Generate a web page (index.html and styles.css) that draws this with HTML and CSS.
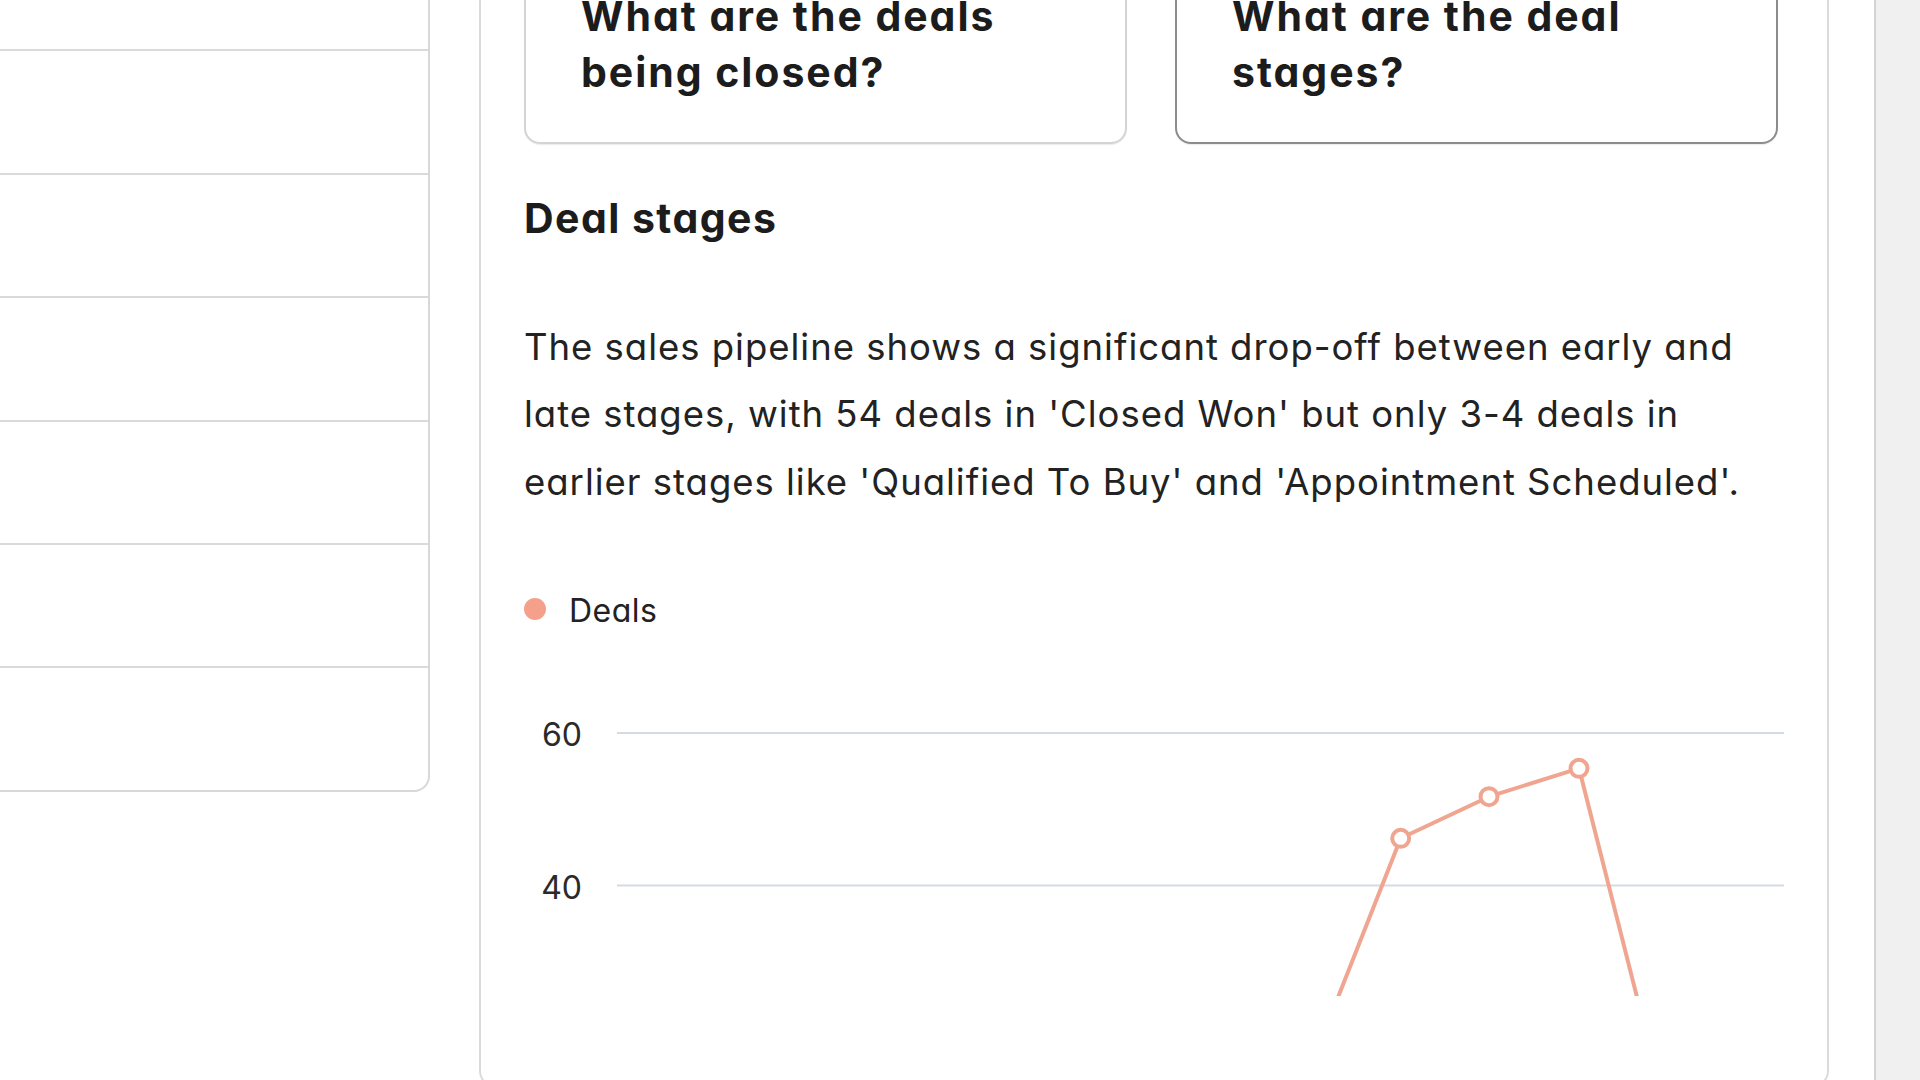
FILE: index.html
```html
<!DOCTYPE html>
<html lang="en">
<head>
<meta charset="utf-8">
<title>Deal stages</title>
<link rel="stylesheet" href="styles.css">
</head>
<body>
<div class="page">
  <aside class="side">
    <div class="side-row"></div>
    <div class="side-row"></div>
    <div class="side-row"></div>
    <div class="side-row"></div>
    <div class="side-row"></div>
    <div class="side-row"></div>
    <div class="side-row last"></div>
  </aside>

  <main class="main-card">
    <div class="questions">
      <div class="q-card">What are the deals being closed?</div>
      <div class="q-card active">What are the deal stages?</div>
    </div>

    <h2 class="section-title">Deal stages</h2>

    <p class="summary">The sales pipeline shows a significant drop-off between early and late stages, with 54 deals in 'Closed Won' but only 3-4 deals in earlier stages like 'Qualified To Buy' and 'Appointment Scheduled'.</p>

    <div class="legend">
      <span class="legend-dot"></span>
      <span class="legend-label">Deals</span>
    </div>

    <svg class="chart" width="1260" height="316" viewBox="0 0 1260 316">
      <line class="grid" x1="93" y1="53" x2="1260" y2="53"/>
      <line class="grid" x1="93" y1="205.5" x2="1260" y2="205.5"/>
      <text class="axis" x="58" y="66">60</text>
      <text class="axis" x="58" y="219">40</text>
      <polyline class="series" points="760.9,452 876.7,158.3 965,116.7 1055,88.3 1173.3,555"/>
      <circle class="pt" cx="876.7" cy="158.3" r="8.5"/>
      <circle class="pt" cx="965" cy="116.7" r="8.5"/>
      <circle class="pt" cx="1055" cy="88.3" r="8.5"/>
    </svg>
  </main>

  <div class="rail"></div>
</div>
</body>
</html>
```

FILE: styles.css
```css
html, body {
  margin: 0;
  padding: 0;
  background: #ffffff;
  overflow: hidden;
}

body {
  width: 1920px;
  height: 1080px;
  font-family: Inter, "Noto Sans", "Liberation Sans", sans-serif;
  font-feature-settings: "cv11" 1;
  color: #1f1f1f;
}

.page {
  display: flex;
  align-items: flex-start;
  height: 1080px;
}

/* left list panel (scrolled) */
.side {
  width: 428px;
  margin-top: -72px;
  flex: none;
  border-right: 2px solid #d6d8da;
  border-bottom: 2px solid #d6d8da;
  border-bottom-right-radius: 16px;
  background: #fff;
}

.side-row {
  height: 121.4px;
  border-bottom: 2px solid #d8dadc;
}

.side-row.last {
  border-bottom: none;
}

/* main content card */
.main-card {
  flex: none;
  width: 1254px;
  margin-left: 49px;
  margin-top: -101px;
  padding: 44.5px 49px 89px 43px;
  border: 2px solid #d8dadc;
  border-radius: 16px;
  background: #fff;
}

.questions {
  display: grid;
  grid-template-columns: 1fr 1fr;
  column-gap: 48px;
}

.q-card {
  padding: 40px 55px 42.5px 55px;
  border: 2px solid #d2d4d6;
  border-radius: 16px;
  box-shadow: 0 1px 1px rgba(0, 0, 0, 0.08);
  font-size: 41px;
  line-height: 56px;
  font-weight: 700;
  color: #1c1c1c;
  letter-spacing: 1.95px;
}

.q-card.active {
  border-color: #8c8c8c;
}

.section-title {
  margin: 49px 0 0 0;
  font-size: 41px;
  line-height: 50px;
  font-weight: 700;
  color: #1c1c1c;
  letter-spacing: 1.45px;
}

.summary {
  margin: 70.5px 0 0 0;
  font-size: 36.5px;
  line-height: 67.5px;
  font-weight: 400;
  color: #222222;
  letter-spacing: 0.98px;
}

.legend {
  display: flex;
  align-items: center;
  gap: 23px;
  margin-top: 75px;
  height: 40px;
}

.legend-dot {
  width: 22px;
  height: 22px;
  border-radius: 50%;
  background: #f4a08b;
  margin-bottom: 4px;
}

.legend-label {
  font-size: 32px;
  line-height: 40px;
  color: #222222;
  letter-spacing: 0.5px;
}

.chart {
  display: block;
  margin-top: 49px;
  overflow: hidden;
}

.grid {
  stroke: #d3dce3;
  stroke-width: 2;
}

.axis {
  font-family: Inter, "Noto Sans", "Liberation Sans", sans-serif;
  font-size: 32px;
  fill: #2a2a2a;
  text-anchor: end;
}

.series {
  fill: none;
  stroke: #f0a590;
  stroke-width: 4;
  stroke-linejoin: round;
}

.pt {
  fill: #ffffff;
  stroke: #f0a590;
  stroke-width: 4;
}

/* right scroll rail */
.rail {
  flex: none;
  width: 44px;
  height: 1080px;
  margin-left: 45px;
  border-left: 2px solid #d4d4d4;
  background: #f0f0f0;
}
```
